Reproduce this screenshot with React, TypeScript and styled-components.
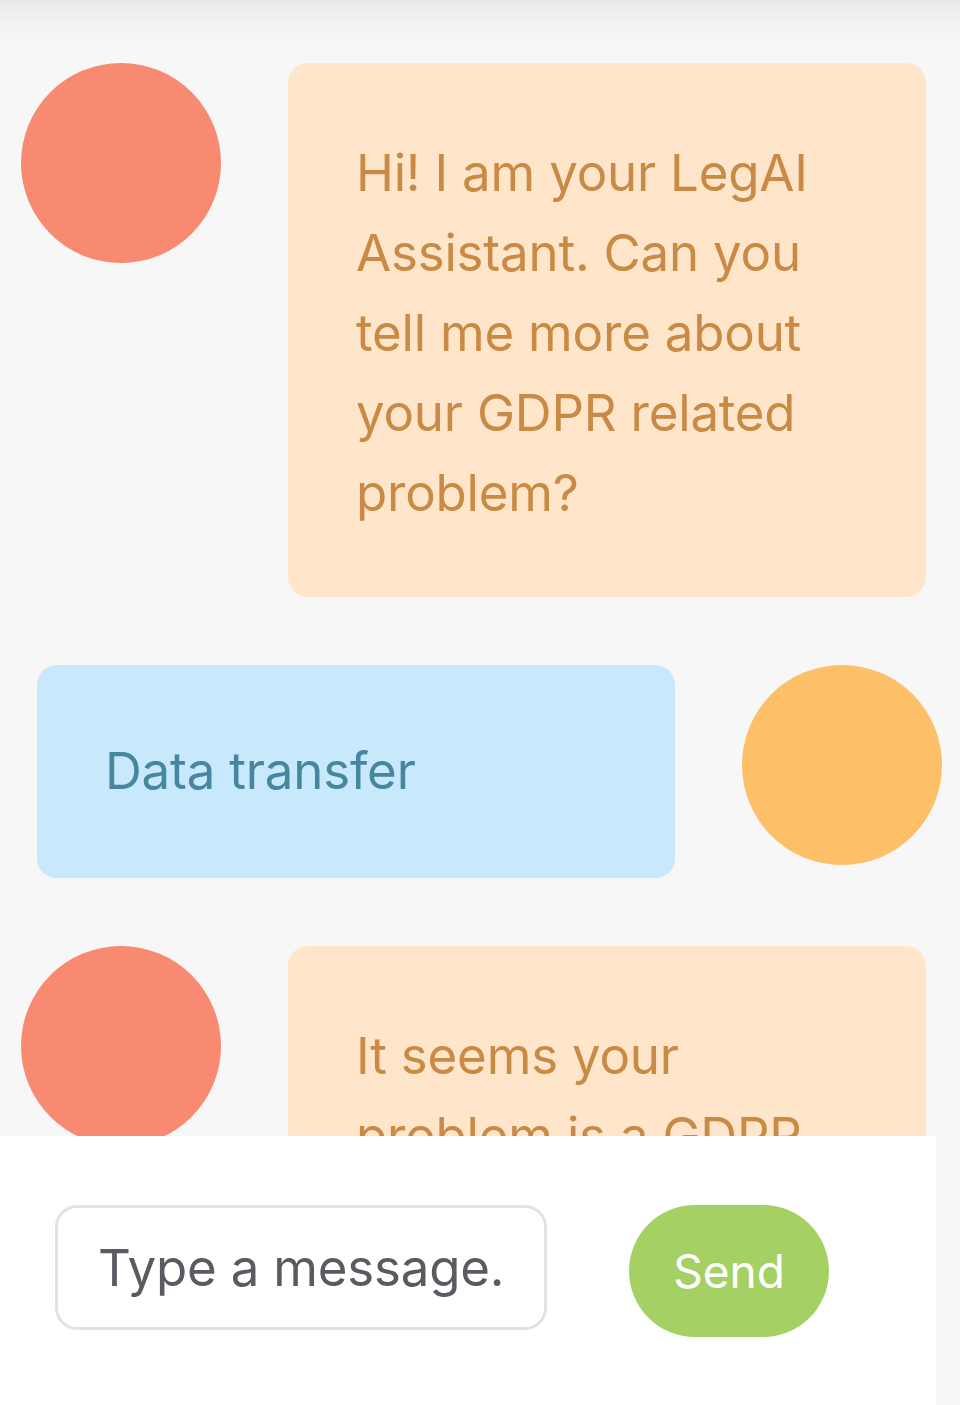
import React from "react";
import styled, { createGlobalStyle } from "styled-components";

const Global = createGlobalStyle`
  html, body { margin: 0; padding: 0; }
  body {
    background: #f7f7f7;
    font-family: Inter, "Noto Sans", "Liberation Sans", sans-serif;
    -webkit-font-smoothing: antialiased;
  }
`;

const Page = styled.div`
  height: 1405px;
  display: flex;
  flex-direction: column;
  overflow: hidden;
  background: linear-gradient(#e9e9e9 0px, #f3f3f3 24px, #f7f7f7 48px);
`;

const ChatArea = styled.div`
  flex: 1;
  overflow: hidden;
  padding-top: 63px;
  display: flex;
  flex-direction: column;
  gap: 68px;
`;

const Row = styled.div<{ $inset: number }>`
  display: flex;
  align-items: flex-start;
  gap: 67px;
  padding-left: ${(p) => p.$inset}px;
  flex-shrink: 0;
`;

const Avatar = styled.div<{ $color: string }>`
  width: 200px;
  height: 200px;
  border-radius: 50%;
  background: ${(p) => p.$color};
  flex-shrink: 0;
`;

const Bubble = styled.div<{ $bg: string; $fg: string }>`
  width: 638px;
  box-sizing: border-box;
  padding: 70px 88px 64px 68px;
  border-radius: 20px;
  background: ${(p) => p.$bg};
  color: ${(p) => p.$fg};
  font-size: 51px;
  line-height: 80px;
  font-weight: 400;
  letter-spacing: -0.2px;
`;

const UserBubble = styled(Bubble)`
  padding: 66px 68px 67px 68px;
`;

const Footer = styled.div`
  height: 269px;
  width: 936px;
  flex-shrink: 0;
  background: #ffffff;
  box-sizing: border-box;
  padding: 69px 0 0 55px;
  display: flex;
  align-items: flex-start;
  gap: 82px;
`;

const Input = styled.div`
  width: 492px;
  height: 125px;
  box-sizing: border-box;
  border: 3px solid #dfe2e7;
  border-radius: 22px;
  display: flex;
  align-items: center;
  padding-left: 40px;
  font-size: 51px;
  color: #585c61;
  letter-spacing: -0.2px;
`;

const SendButton = styled.button`
  width: 200px;
  height: 132px;
  border: none;
  border-radius: 66px;
  background: #a5d164;
  color: #ffffff;
  font-family: inherit;
  font-size: 46px;
  display: flex;
  align-items: center;
  justify-content: center;
  padding: 0;
`;

export default function App() {
  return (
    <Page>
      <Global />
      <ChatArea>
        <Row $inset={21}>
          <Avatar $color="#f78a70" />
          <Bubble $bg="#ffe5ca" $fg="#c88a44">
            Hi! I am your LegAI Assistant. Can you tell me more about your GDPR related problem?
          </Bubble>
        </Row>
        <Row $inset={37}>
          <UserBubble $bg="#c8e9fb" $fg="#46869f">
            Data transfer
          </UserBubble>
          <Avatar $color="#fdbf68" />
        </Row>
        <Row $inset={21}>
          <Avatar $color="#f78a70" />
          <Bubble $bg="#ffe5ca" $fg="#c88a44">
            It seems your problem is a GDPR related issue about data transfer.
          </Bubble>
        </Row>
      </ChatArea>
      <Footer>
        <Input>Type a message.</Input>
        <SendButton>Send</SendButton>
      </Footer>
    </Page>
  );
}
